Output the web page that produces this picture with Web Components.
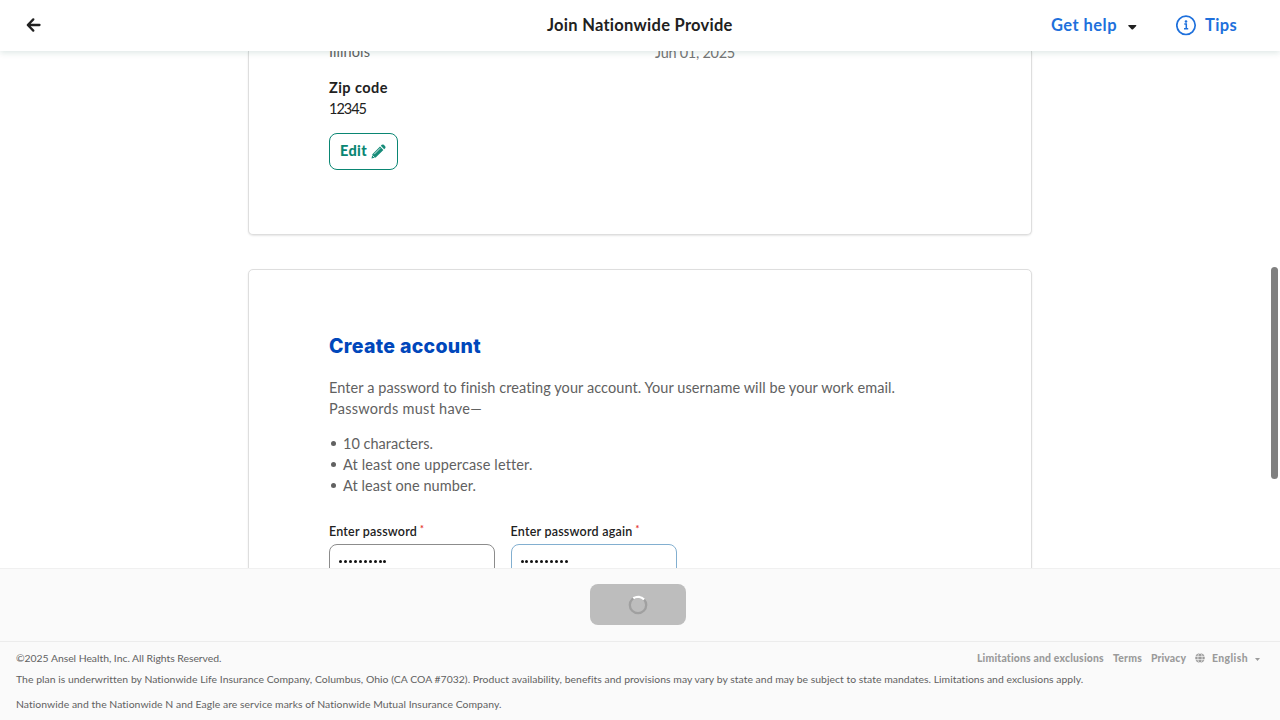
<!DOCTYPE html>
<html lang="en">
<head>
<meta charset="utf-8">
<title>Join Nationwide Provide</title>
<style>
html, body { margin: 0; height: 100%; overflow: hidden; background: #fff; }
body { font-family: Lato, "Open Sans", sans-serif; font-size: 14.5px; line-height: 21px; color: #212121; }
</style>
</head>
<body>
<enroll-app></enroll-app>
<script>
function define(name, html, init) {
  const tpl = document.createElement('template');
  tpl.innerHTML = html;
  customElements.define(name, class extends HTMLElement {
    constructor() {
      super();
      this.attachShadow({ mode: 'open' }).appendChild(tpl.content.cloneNode(true));
    }
    connectedCallback() { if (init) init(this, this.shadowRoot); }
  });
}

// A single line of text, tracked so that it fills the width given in "w".
define('text-run', `<style>:host{display:block;white-space:nowrap}span{display:inline-block;vertical-align:top}</style><span><slot></slot></span>`, (el, root) => {
  const span = root.querySelector('span');
  const w = parseFloat(el.getAttribute('w'));
  span.style.letterSpacing = '0px';
  const natural = span.getBoundingClientRect().width;
  const count = el.textContent.length;
  if (w && natural) {
    span.style.letterSpacing = ((w - natural) / count) + 'px';
    el.style.width = w + 'px';
  }
});

define('top-bar', `
<style>
:host{display:grid;grid-template-columns:1fr 186px 1fr;align-items:center;height:51px;box-sizing:border-box;flex:none;background:#fff;box-shadow:0 2px 6px rgba(0,80,65,.13);position:relative;z-index:2;font-size:16.5px;font-weight:700;padding:0 43px 0 26px}
.right{display:flex;align-items:center;justify-content:flex-end;color:#1e70dc}
.caret{margin:3px 39px 0 11px}.info{margin-right:8px}
.title{margin-left:8.5px}
svg{display:block;flex:none}
.back{margin-bottom:2px}
</style>
<svg class="back" width="16" height="16" viewBox="0 0 16 16" fill="none" stroke="#212121" stroke-width="2.3" stroke-linecap="round" stroke-linejoin="round"><path d="M13.5 8H2M7.3 2.4L1.8 8l5.5 5.6"/></svg>
<div class="title"><text-run w="186">Join Nationwide Provide</text-run></div>
<div class="right"><text-run w="66">Get help</text-run>
<svg class="caret" width="9" height="5" viewBox="0 0 9 5"><path d="M.7 0h7.2q.8.3.3.9L5.1 4.2q-.8.6-1.5 0L.4.9Q0 .3.7 0z" fill="#212121"/></svg>
<svg class="info" width="21" height="21" viewBox="0 0 21 21" fill="none" stroke="#1e70dc"><circle cx="10" cy="10.3" r="9.2" stroke-width="1.7"/><path d="M8.3 9.1h2v4.5M8 13.8h4.2" stroke-width="1.5"/><circle cx="10" cy="6.5" r="1.3" fill="#1e70dc" stroke="none"/></svg>
<text-run w="32">Tips</text-run></div>`);

define('page-card', `
<style>:host{display:block;box-sizing:border-box;width:784px;flex:none;border:1px solid #dedede;border-radius:5px;padding:0 80px;background:#fff;box-shadow:0 1px 2px rgba(0,0,0,.1)}</style><slot></slot>`);

define('edit-button', `
<style>
:host{display:flex;align-items:center;box-sizing:border-box;width:69px;height:37px;border:1px solid #0a8673;border-radius:8px;padding:0 10px;gap:4px;color:#0a8673;font-weight:900}
text-run{margin-top:-2px}
svg{flex:none}
</style><text-run w="27">Edit</text-run>
<svg width="15" height="15" viewBox="0 0 15 15"><path d="M.5 14.5l.9-4.3L9 2.6l3.4 3.4-7.7 7.6zM9.8 1.8l1-1q1-.8 2 0l1.4 1.4q.8 1 0 2l-1 1z" fill="#168c79"/><path d="M3.2 10.2l6-6M1.4 11.4l2.2 2.2" stroke="#fff" stroke-width=".8"/></svg>`);

define('password-field', `
<style>
:host{display:block;width:166px;font-size:12.5px;line-height:18px;font-weight:600}
.label{display:flex;align-items:flex-start;gap:3px;height:21px;color:#212121}
.star{color:#e53935;font-size:9px;line-height:12px;font-weight:900}
.box{box-sizing:border-box;height:42px;border:1px solid var(--edge,#8c8c8c);border-radius:8px;padding:15px 0 0 9px;display:flex;gap:1.95px;background:#fff}
i{width:3px;height:3px;border-radius:50%;background:#111}
</style>
<div class="label"><slot></slot><span class="star">*</span></div>
<div class="box"></div>`, (el, root) => {
  root.querySelector('.box').innerHTML = '<i></i>'.repeat(10);
});

define('account-details', `
<style>
:host{display:flow-root;margin-top:-9px}
div{height:21px}
.row{display:grid;grid-template-columns:326px 1fr;color:#616161}
.row .first{margin-top:-1px}
.date{color:#757575}
.zip{margin-top:14px;font-weight:700}
edit-button{margin-top:14px}
</style>
<div class="row"><text-run class="first" w="41">Illinois</text-run><text-run class="date" w="80">Jun 01, 2025</text-run></div>
<div class="zip"><text-run w="59">Zip code</text-run></div>
<div><text-run w="37">12345</text-run></div>
<edit-button></edit-button>`);

define('create-account', `
<style>
:host{display:flow-root;color:#616161}
h2{margin:63px 0 0;font:800 19.5px/26px Inter,sans-serif;color:#0047bb}
p{margin:18px 0 14px}
ul{list-style:none;margin:0;padding:0}
li{height:21px;display:flex;align-items:center;gap:7px;padding-left:2px}
li::before{content:"";width:5px;height:5px;border-radius:50%;background:#616161}
.fields{display:flex;gap:15.5px;margin-top:27px}
</style>
<h2><text-run w="152">Create account</text-run></h2>
<p><text-run w="566">Enter a password to finish creating your account. Your username will be your work email.</text-run><text-run w="153">Passwords must have—</text-run></p>
<ul><li><text-run w="90">10 characters.</text-run></li><li><text-run w="189">At least one uppercase letter.</text-run></li><li><text-run w="133">At least one number.</text-run></li></ul>
<div class="fields"><password-field><text-run w="88">Enter password</text-run></password-field><password-field style="--edge:#82afd0"><text-run w="122">Enter password again</text-run></password-field></div>`);

define('action-bar', `
<style>
:host{display:flex;justify-content:center;flex:none;height:73px;box-sizing:border-box;border-top:1px solid #f0f0f0;background:#fafafa;padding:15.4px 3.5px 0 0;position:relative;z-index:1}
.btn{width:96px;height:41px;border-radius:8px;background:#bdbdbd;display:flex;align-items:center;justify-content:center}
</style>
<div class="btn"><svg width="20" height="20" viewBox="0 0 20 20" fill="none" stroke-width="2.3"><circle cx="10" cy="10" r="8.2" stroke="#a0a0a0"/><path d="M5.3 3.3A8.2 8.2 0 0 1 16.1 4.5" stroke="#fff"/></svg></div>`);

define('page-footer', `
<style>
:host{display:block;box-sizing:border-box;height:79px;flex:none;border-top:1px solid #ececec;background:#fafafa;padding:8px 16px 0;font-size:10.4px;line-height:16px;color:#616161}
.top{display:flex;justify-content:space-between;height:16px}
nav{display:flex;align-items:center;color:#9b9b9b;font-weight:900;gap:9px;padding-right:4px}
.p{height:16px;margin-top:5px}.p + .p{margin-top:9px}
svg{display:block;flex:none}
.caret{margin:3px 0 0 -2px}
.lang{margin-left:-2px}
</style>
<div class="top"><text-run w="205.5">©2025 Ansel Health, Inc. All Rights Reserved.</text-run>
<nav><text-run w="127">Limitations and exclusions</text-run><text-run w="29">Terms</text-run><text-run w="35">Privacy</text-run>
<svg width="10" height="10" viewBox="0 0 10 10"><circle cx="5" cy="5" r="4.8" fill="#9b9b9b"/><g fill="none" stroke="#fafafa" stroke-width=".7"><ellipse cx="5" cy="5" rx="2.1" ry="4.8"/><path d="M0 3.4h10M0 6.6h10"/></g></svg>
<text-run class="lang" w="36">English</text-run><svg class="caret" width="5" height="3" viewBox="0 0 5 3"><path d="M0 0h5L2.5 3z" fill="#9b9b9b"/></svg></nav></div>
<div class="p"><text-run w="1067">The plan is underwritten by Nationwide Life Insurance Company, Columbus, Ohio (CA COA #7032). Product availability, benefits and provisions may vary by state and may be subject to state mandates. Limitations and exclusions apply.</text-run></div>
<div class="p"><text-run w="486">Nationwide and the Nationwide N and Eagle are service marks of Nationwide Mutual Insurance Company.</text-run></div>`);

define('enroll-app', `
<style>
:host{display:flex;flex-direction:column;height:720px;width:1280px;overflow:hidden;position:relative}
main{flex:1;min-height:0;overflow:hidden;display:flex;flex-direction:column;align-items:center;gap:34px}
.first{height:184px;border-top:0;border-top-left-radius:0;border-top-right-radius:0}
.second{height:400px}
.thumb{position:absolute;z-index:3;right:2px;top:267px;width:7px;height:212px;border-radius:4px;background:#808080}
</style>
<top-bar></top-bar>
<main><page-card class="first"><account-details></account-details></page-card><page-card class="second"><create-account></create-account></page-card></main>
<action-bar></action-bar>
<page-footer></page-footer>
<div class="thumb"></div>`);
</script>
</body>
</html>
